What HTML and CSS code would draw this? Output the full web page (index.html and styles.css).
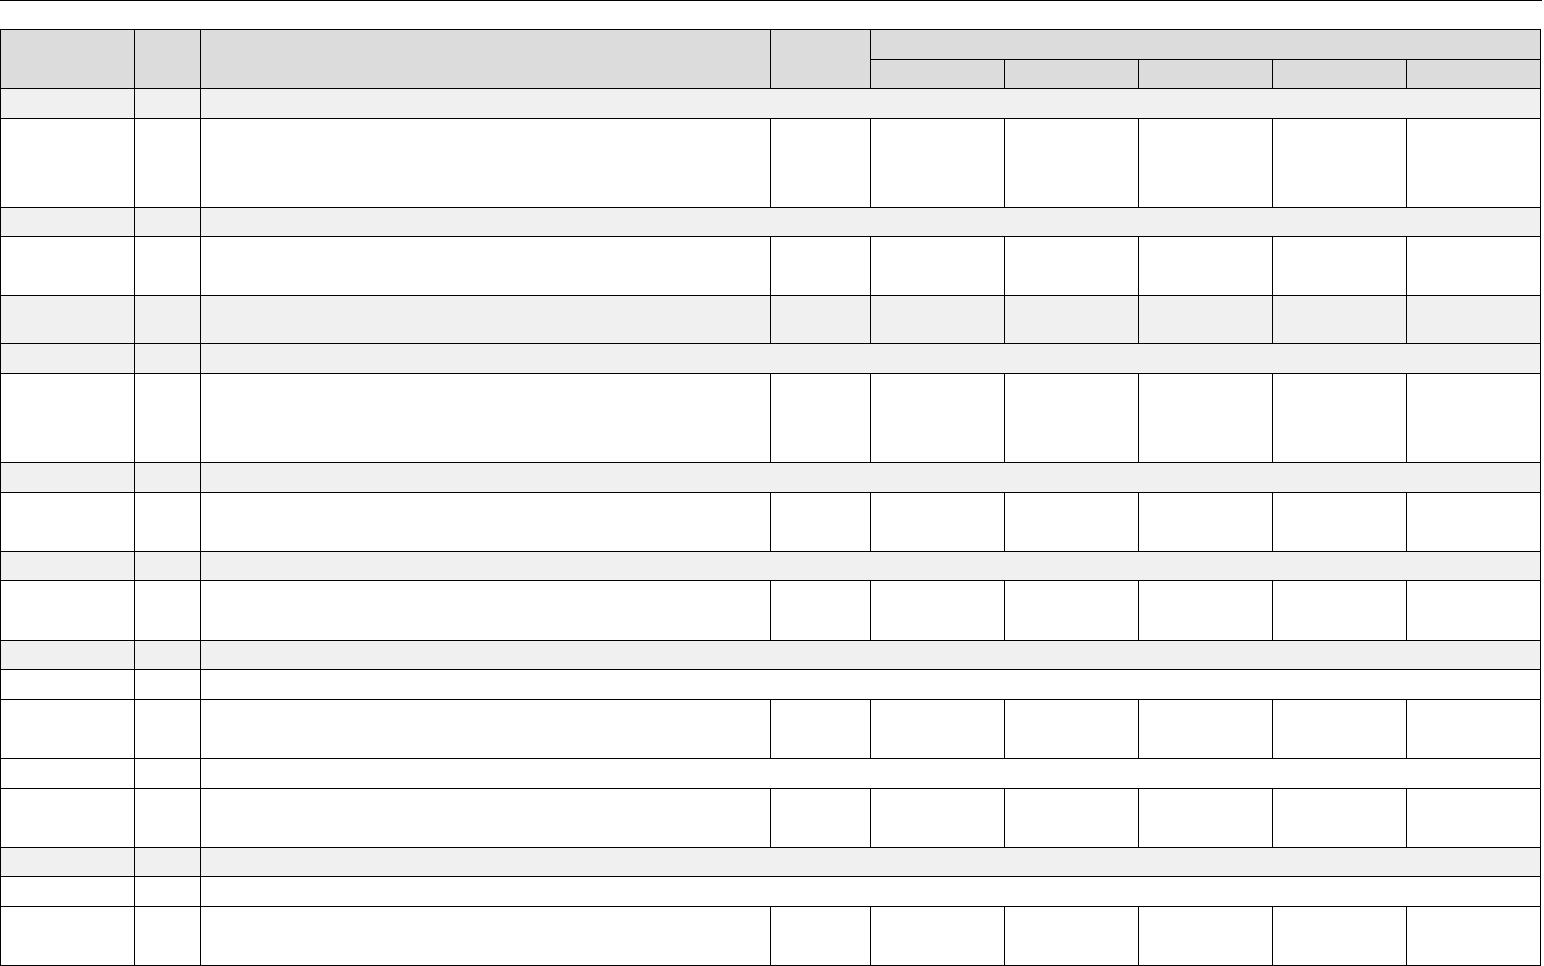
FILE: index.html
```html
<!DOCTYPE html>
<html lang="en">
<head>
<meta charset="utf-8">
<title>Table</title>
<link rel="stylesheet" href="styles.css">
</head>
<body>
<div class="rule"></div>
<div class="sheet">
  <div class="head">
    <div class="c hd span2"></div>
    <div class="c hd span2"></div>
    <div class="c hd span2"></div>
    <div class="c hd span2"></div>
    <div class="c hd group"></div>
    <div class="c hd"></div>
    <div class="c hd"></div>
    <div class="c hd"></div>
    <div class="c hd"></div>
    <div class="c hd"></div>
  </div>

  <div class="row sec r29"><div class="c"></div><div class="c"></div><div class="c wide"></div></div>
  <div class="row r88"><div class="c"></div><div class="c"></div><div class="c"></div><div class="c"></div><div class="c"></div><div class="c"></div><div class="c"></div><div class="c"></div><div class="c"></div></div>

  <div class="row sec r28"><div class="c"></div><div class="c"></div><div class="c wide"></div></div>
  <div class="row r58"><div class="c"></div><div class="c"></div><div class="c"></div><div class="c"></div><div class="c"></div><div class="c"></div><div class="c"></div><div class="c"></div><div class="c"></div></div>
  <div class="row shade r47"><div class="c"></div><div class="c"></div><div class="c"></div><div class="c"></div><div class="c"></div><div class="c"></div><div class="c"></div><div class="c"></div><div class="c"></div></div>

  <div class="row sec r29"><div class="c"></div><div class="c"></div><div class="c wide"></div></div>
  <div class="row r88"><div class="c"></div><div class="c"></div><div class="c"></div><div class="c"></div><div class="c"></div><div class="c"></div><div class="c"></div><div class="c"></div><div class="c"></div></div>

  <div class="row sec r29"><div class="c"></div><div class="c"></div><div class="c wide"></div></div>
  <div class="row r58"><div class="c"></div><div class="c"></div><div class="c"></div><div class="c"></div><div class="c"></div><div class="c"></div><div class="c"></div><div class="c"></div><div class="c"></div></div>

  <div class="row sec r28"><div class="c"></div><div class="c"></div><div class="c wide"></div></div>
  <div class="row r59"><div class="c"></div><div class="c"></div><div class="c"></div><div class="c"></div><div class="c"></div><div class="c"></div><div class="c"></div><div class="c"></div><div class="c"></div></div>

  <div class="row sec r28"><div class="c"></div><div class="c"></div><div class="c wide"></div></div>
  <div class="row sub r29"><div class="c"></div><div class="c"></div><div class="c wide"></div></div>
  <div class="row r58"><div class="c"></div><div class="c"></div><div class="c"></div><div class="c"></div><div class="c"></div><div class="c"></div><div class="c"></div><div class="c"></div><div class="c"></div></div>
  <div class="row sub r29"><div class="c"></div><div class="c"></div><div class="c wide"></div></div>
  <div class="row r58"><div class="c"></div><div class="c"></div><div class="c"></div><div class="c"></div><div class="c"></div><div class="c"></div><div class="c"></div><div class="c"></div><div class="c"></div></div>

  <div class="row sec r28"><div class="c"></div><div class="c"></div><div class="c wide"></div></div>
  <div class="row sub r29"><div class="c"></div><div class="c"></div><div class="c wide"></div></div>
  <div class="row r58"><div class="c"></div><div class="c"></div><div class="c"></div><div class="c"></div><div class="c"></div><div class="c"></div><div class="c"></div><div class="c"></div><div class="c"></div></div>
</div>
</body>
</html>
```

FILE: styles.css
```css
html, body {
  margin: 0;
  padding: 0;
  background: #ffffff;
  font-family: "Liberation Sans", Arial, sans-serif;
  font-size: 14px;
  color: #000000;
}

.rule {
  width: 1542px;
  height: 0;
  border-top: 1px solid #000000;
  margin-bottom: 28px;
}

.sheet {
  width: 1539px;
  background: #000000;
  padding: 1px;
  display: flex;
  flex-direction: column;
  gap: 1px;
}

.head,
.row {
  display: grid;
  grid-template-columns: 133px 65px 569px 99px repeat(5, 133px);
  gap: 1px;
}

.head {
  grid-template-rows: 29px 28px;
}

.c {
  background: #ffffff;
}

.hd {
  background: #dcdcdc;
}

.span2 {
  grid-row: span 2;
}

.group {
  grid-column: 5 / -1;
}

.wide {
  grid-column: 3 / -1;
}

.sec .c,
.shade .c {
  background: #f0f0f0;
}

.r28 { height: 28px; }
.r29 { height: 29px; }
.r47 { height: 47px; }
.r58 { height: 58px; }
.r59 { height: 59px; }
.r88 { height: 88px; }
```
